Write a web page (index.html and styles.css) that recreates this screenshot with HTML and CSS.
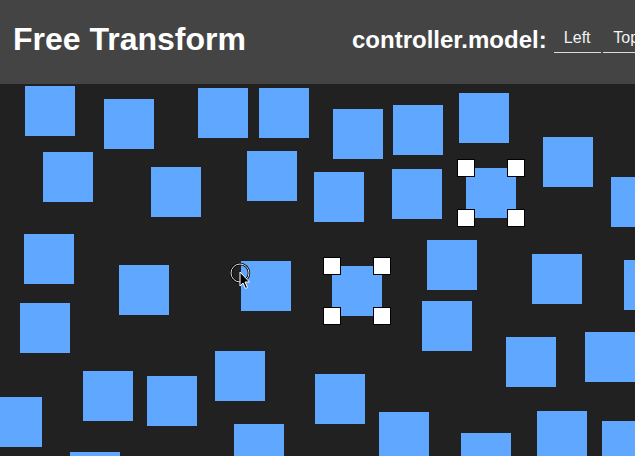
FILE: index.html
```html
<!DOCTYPE html>
<html lang="en">
<head>
  <meta charset="UTF-8">
  <title>Free Transform</title>
  <link rel="stylesheet" href="styles.css">
</head>
<body>
    <header class="topbar">
        <h1 class="title">Free Transform</h1>
        <div class="model">
            <span class="model-label">controller.model:</span>
            <input class="field" type="text" value="Left">
            <input class="field" type="text" value="Top">
        </div>
    </header>

    <!-- Canvas with the boxes -->
    <main class="stage" id="stage">
        <svg class="pointer" width="24" height="30" viewBox="0 0 24 30">
          <circle cx="10" cy="11" r="9" fill="none" stroke="#000" stroke-width="2.5"/>
          <circle cx="10" cy="11" r="9" fill="none" stroke="#ddd" stroke-width="1"/>
          <path d="M10 10 L10 24 L13 21 L15.5 26.5 L17.5 25.5 L15 20 L19.5 20 Z" fill="#000" stroke="#fff" stroke-width="1"/>
        </svg>
    </main>

    <script>
      // box positions inside the canvas (x, y), last flag = selected
      const boxes = [
        [25, 2], [104, 15], [198, 4], [259, 4], [43, 68], [151, 83], [247, 67],
        [314, 88], [24, 150], [119, 181], [241, 177], [333, 25], [393, 21],
        [459, 9], [543, 53], [392, 85], [466, 84, true], [611, 93], [427, 156],
        [532, 170], [624, 176], [332, 182, true], [20, 219], [215, 267],
        [83, 287], [147, 292], [-8, 313], [234, 340], [70, 368], [315, 290],
        [422, 217], [506, 253], [585, 248], [379, 328], [461, 349], [537, 327],
        [602, 337]
      ];

      const stage = document.getElementById('stage');
      const pointer = stage.querySelector('.pointer');

      boxes.forEach(([x, y, selected]) => {
        const box = document.createElement('div');
        box.className = 'box';
        box.style.left = x + 'px';
        box.style.top = y + 'px';
        if (selected) {
          ['tl', 'tr', 'bl', 'br'].forEach(corner => {
            const handle = document.createElement('span');
            handle.className = 'handle ' + corner;
            box.appendChild(handle);
          });
        }
        stage.insertBefore(box, pointer);
      });
    </script>
</body>
</html>
```

FILE: styles.css
```css
body {
  margin: 0;
  font-family: "Liberation Sans", Arial, sans-serif;
  background-color: #212121;
  overflow: hidden;
}

/* Верхня панель */
.topbar {
  display: flex;
  align-items: center;
  height: 84px;
  padding: 0 13px;
  background-color: #444;
  color: white;
  white-space: nowrap;
}

.title {
  margin: 0;
  font-size: 32px;
  font-weight: bold;
  position: relative;
  top: -3px;
  flex-shrink: 0;
}

.model {
  display: flex;
  align-items: center;
  margin-left: 106px;
  flex-shrink: 0;
}

.model-label {
  font-size: 24px;
  font-weight: bold;
  margin-right: 7px;
  position: relative;
  top: -2px;
}

.field {
  width: 47px;
  box-sizing: border-box;
  margin: 0 2px 0 0;
  padding: 4px 0 5px;
  border: none;
  border-bottom: 1px solid #ddd;
  background: transparent;
  color: #f2f2f2;
  font-family: "Liberation Sans", Arial, sans-serif;
  font-size: 16px;
  text-align: center;
  flex-shrink: 0;
  position: relative;
  top: -3px;
}

/* Полотно */
.stage {
  position: relative;
  height: 372px;
  overflow: hidden;
}

.box {
  position: absolute;
  width: 50px;
  height: 50px;
  background-color: #60a8ff;
}

.handle {
  position: absolute;
  width: 16px;
  height: 16px;
  background: white;
  border: 1px solid black;
}
.handle.tl { left: -9px; top: -9px; }
.handle.tr { right: -9px; top: -9px; }
.handle.bl { left: -9px; bottom: -9px; }
.handle.br { right: -9px; bottom: -9px; }

.pointer {
  position: absolute;
  left: 230px;
  top: 178px;
}
```
